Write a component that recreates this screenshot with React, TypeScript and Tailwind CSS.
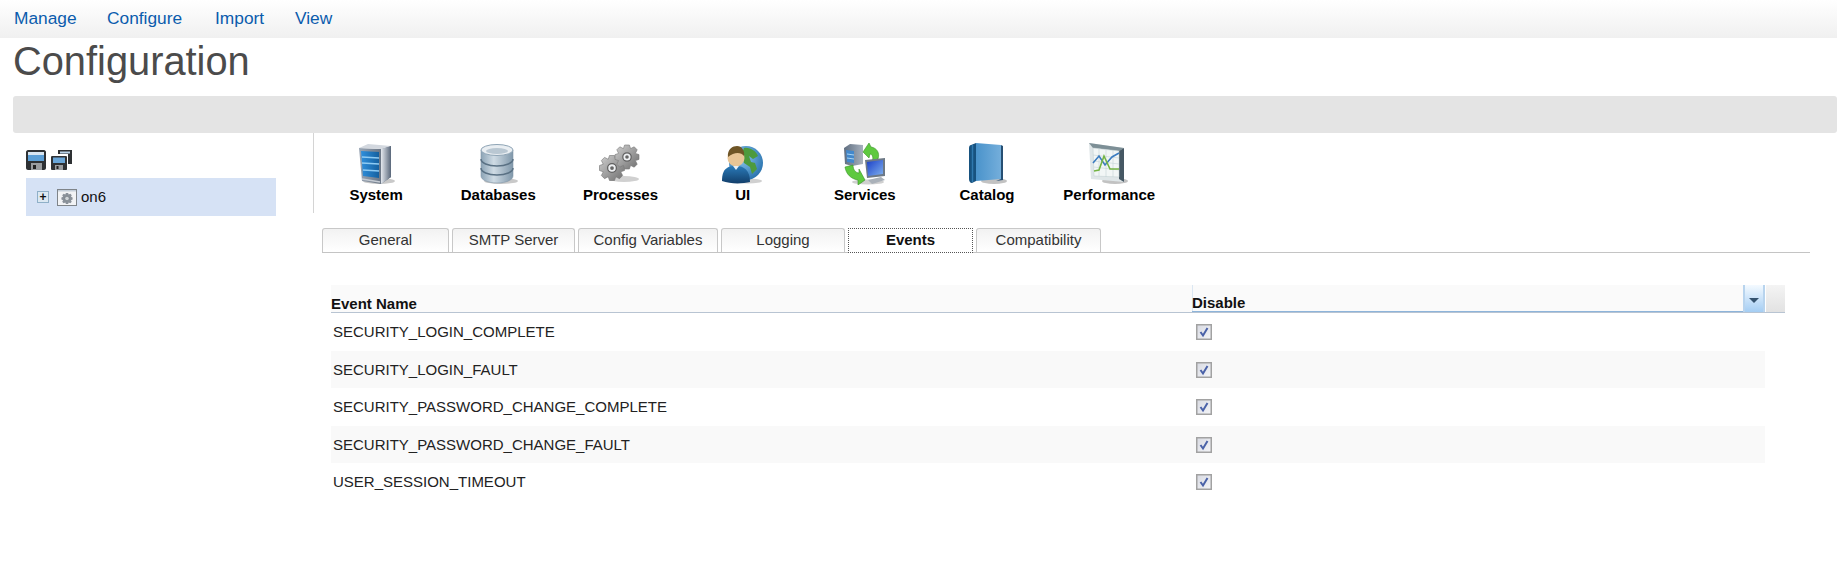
import type { ReactNode } from 'react'

const SystemIcon = () => (
  <svg width="42" height="42" viewBox="0 0 42 42">
    <defs>
      <linearGradient id="sysSide" x1="0" x2="1" y1="0" y2="0">
        <stop offset="0" stopColor="#e4e8ee" />
        <stop offset="1" stopColor="#59677a" />
      </linearGradient>
      <linearGradient id="sysFrame" x1="0" x2="1" y1="0" y2="0">
        <stop offset="0" stopColor="#9aa6b5" />
        <stop offset="1" stopColor="#55606f" />
      </linearGradient>
      <linearGradient id="sysFront" x1="0" x2="1" y1="0" y2="0">
        <stop offset="0" stopColor="#2f8fdc" />
        <stop offset="1" stopColor="#15609f" />
      </linearGradient>
    </defs>
    <ellipse cx="24" cy="38" rx="16" ry="3" fill="#777" opacity="0.4" />
    <path d="M4 5 26 6 36 3 36 34 26 41 7 38Z" fill="url(#sysFrame)" />
    <path d="M4 5 13 1 36 3 26 6Z" fill="#d3d8df" />
    <path d="M26 6 36 3 36 34 26 41Z" fill="url(#sysSide)" />
    <path d="M6 8 24 9 24 35 8 33Z" fill="url(#sysFront)" />
    <path d="M7 14 24 15M7 20 24 21M8 27 24 28" stroke="#8fcbf3" strokeWidth="1.300" />
    <path d="M7 36 25 39" stroke="#c6ccd4" strokeWidth="1.500" />
  </svg>
)

const DatabaseIcon = () => (
  <svg width="42" height="42" viewBox="0 0 42 42">
    <defs>
      <linearGradient id="dbBody" x1="0" x2="1" y1="0" y2="0">
        <stop offset="0" stopColor="#8ca4b6" />
        <stop offset="0.4" stopColor="#cfdbe4" />
        <stop offset="1" stopColor="#7f97aa" />
      </linearGradient>
    </defs>
    <ellipse cx="24" cy="38" rx="17" ry="3" fill="#777" opacity="0.4" />
    <path d="M4 7V33C4 37 11 40 20 40S36 37 36 33V7Z" fill="url(#dbBody)" stroke="#8397a8" strokeWidth="0.6" />
    <ellipse cx="20" cy="7" rx="16" ry="5.500" fill="#e9eef2" stroke="#8ea4b5" />
    <ellipse cx="20" cy="8" rx="11" ry="3" fill="#b9c7d2" />
    <path d="M4 16C4 20 11 23 20 23S36 20 36 16M4 25C4 29 11 32 20 32S36 29 36 25" fill="none" stroke="#5a7184" strokeWidth="1.500" />
  </svg>
)

const gearPath =
  'M-2-10H2L3-7 6-8.500 8.500-6 7-3 10-2V2L7 3 8.500 6 6 8.500 3 7 2 10H-2L-3 7-6 8.500-8.500 6-7 3-10 2V-2L-7-3-8.500-6-6-8.500-3-7Z'

const GearsIcon = () => (
  <svg width="42" height="42" viewBox="0 0 42 42">
    <defs>
      <linearGradient id="gear" x1="0" x2="1" y1="0" y2="1">
        <stop offset="0" stopColor="#cfcfcf" />
        <stop offset="1" stopColor="#6e6e6e" />
      </linearGradient>
    </defs>
    <ellipse cx="25" cy="36" rx="15" ry="3" fill="#777" opacity="0.35" />
    <g transform="translate(13 25) scale(1.250)">
      <path d={gearPath} fill="url(#gear)" stroke="#777" strokeWidth="0.5" />
      <circle r="3.500" fill="#eef0f2" stroke="#5f5f5f" />
      <circle r="1.500" fill="#666" />
    </g>
    <g transform="translate(28 14) scale(1.200)">
      <path d={gearPath} fill="url(#gear)" stroke="#777" strokeWidth="0.5" />
      <circle r="3.500" fill="#eef0f2" stroke="#5f5f5f" />
      <circle r="1.500" fill="#666" />
    </g>
  </svg>
)

const UiIcon = () => (
  <svg width="42" height="42" viewBox="0 0 42 42">
    <defs>
      <radialGradient id="globe" cx="0.4" cy="0.35" r="0.75">
        <stop offset="0" stopColor="#8cc7ef" />
        <stop offset="1" stopColor="#1f6aa8" />
      </radialGradient>
      <linearGradient id="uiShirt" x1="0" x2="0" y1="0" y2="1">
        <stop offset="0" stopColor="#2a7ab8" />
        <stop offset="1" stopColor="#123f6b" />
      </linearGradient>
    </defs>
    <ellipse cx="26" cy="38" rx="14" ry="2.500" fill="#777" opacity="0.35" />
    <circle cx="24" cy="20" r="17" fill="url(#globe)" />
    <path d="M22 5C28 4 34 8 36 13L31 16 27 13 29 19 33 20 35 26 30 31 28 24 22 20 19 12Z" fill="#4d9a3c" />
    <circle cx="14" cy="15" r="8.500" fill="#e8c596" />
    <path d="M6 14C5 6 11 3 15 3 20 3 23 8 22 13 19 9 12 9 6 14Z" fill="#6f5526" />
    <path d="M0 38C0 25 6 23 14 23S28 27 28 39C20 41 8 41 0 38Z" fill="url(#uiShirt)" />
    <path d="M11 23 14 27 17 23Z" fill="#e8eef4" />
  </svg>
)

const ServicesIcon = () => (
  <svg width="42" height="42" viewBox="0 0 42 42">
    <defs>
      <linearGradient id="screen" x1="0" x2="1" y1="0" y2="1">
        <stop offset="0" stopColor="#1a3fc8" />
        <stop offset="1" stopColor="#7fb0ee" />
      </linearGradient>
      <linearGradient id="srv" x1="0" x2="1" y1="0" y2="0">
        <stop offset="0" stopColor="#5f6e80" />
        <stop offset="1" stopColor="#a7b1be" />
      </linearGradient>
    </defs>
    <ellipse cx="24" cy="39" rx="16" ry="2.500" fill="#777" opacity="0.35" />
    <path d="M0 5 6 1 19 2 19 21 8 23 1 21Z" fill="url(#srv)" />
    <path d="M2 7 10 8 10 20 3 19Z" fill="#4288cc" />
    <path d="M3 11 10 12M3 15 10 16" stroke="#a8d4f2" />
    <path d="M19 9 25 0 27 4C33 5 36 10 34 16L28 19C30 14 28 11 26 11L25 15Z" fill="#5ec93f" stroke="#379126" strokeWidth="0.6" />
    <path d="M21 37 14 42 14 37C7 36 2 31 1 24L9 22C9 27 12 30 15 30L15 26Z" fill="#5ec93f" stroke="#379126" strokeWidth="0.6" />
    <path d="M21 17 41 15 41 33 23 35Z" fill="#6d7986" />
    <path d="M23 19 39 17 39 31 24 33Z" fill="url(#screen)" />
    <path d="M24 37 37 34 41 37 28 41Z" fill="#aab1b9" />
  </svg>
)

const CatalogIcon = () => (
  <svg width="42" height="42" viewBox="0 0 42 42">
    <defs>
      <linearGradient id="book" x1="0" x2="1" y1="0" y2="0">
        <stop offset="0" stopColor="#4a93cb" />
        <stop offset="1" stopColor="#74aedb" />
      </linearGradient>
    </defs>
    <ellipse cx="28" cy="38" rx="13" ry="3" fill="#777" opacity="0.45" />
    <path d="M5 2 10 0 10 38 6 40C4 40 3 38 3 36V5C3 3 4 2 5 2Z" fill="#17527f" />
    <path d="M10 0 35 2 35 36 10 38Z" fill="url(#book)" />
    <path d="M35 2 37 3 37 37 30 38 35 36Z" fill="#264f73" />
    <path d="M6.500 2V39" stroke="#2f78ae" strokeWidth="1.500" />
  </svg>
)

const PerformanceIcon = () => (
  <svg width="42" height="42" viewBox="0 0 42 42">
    <ellipse cx="27" cy="38" rx="13" ry="3" fill="#777" opacity="0.45" />
    <path d="M1 0 36 5 36 39 3 36Z" fill="#dfe6e8" />
    <path d="M1 0 36 5 31 8 5 5Z" fill="#7d8f96" />
    <path d="M31 8 36 5 36 39 31 36Z" fill="#465864" />
    <path d="M5 5 31 8 31 34 6 33Z" fill="#f2f6f6" stroke="#bfcccf" strokeWidth="0.5" />
    <path d="M5 12 31 15M5 18 31 21M6 24 31 27M11 6V33M18 7V34M25 7V34" stroke="#c4d4d6" strokeWidth="0.6" />
    <path d="M5 20 11 13 17 22 24 14 31 10" fill="none" stroke="#3b7cc0" strokeWidth="1.600" />
    <path d="M6 28 11 27 16 13 22 26 31 26" fill="none" stroke="#74b444" strokeWidth="1.600" />
  </svg>
)

const SaveIcon = () => (
  <svg width="20" height="20" viewBox="0 0 20 20">
    <path d="M2 0H18C19 0 20 1 20 2V18C20 19 19 20 18 20H2C1 20 0 19 0 18V2C0 1 1 0 2 0Z" fill="#2e3134" />
    <rect x="2" y="2" width="16" height="9" fill="#d8e6f2" />
    <rect x="2" y="5" width="16" height="6" fill="#5c9fd6" />
    <rect x="5" y="13" width="11" height="7" fill="#9a9da0" />
    <rect x="7" y="15" width="3" height="4" fill="#222" />
  </svg>
)

const SaveAllIcon = () => (
  <svg width="21" height="20" viewBox="0 0 21 20">
    <path d="M7 0H21V14H17V4H7Z" fill="#2e3134" />
    <rect x="9" y="1.500" width="10" height="2" fill="#b8d2e8" />
    <path d="M1 6H15C16 6 16 7 16 7V19C16 20 15 20 15 20H1C0 20 0 19 0 19V7C0 6 1 6 1 6Z" fill="#2e3134" />
    <rect x="2" y="7.500" width="12" height="5.500" fill="#6aa6d8" />
    <rect x="4" y="15" width="8" height="5" fill="#9a9da0" />
    <rect x="5.500" y="16" width="2" height="3" fill="#222" />
  </svg>
)

const NodeIcon = () => (
  <svg width="20" height="17" viewBox="0 0 20 17">
    <rect x="0.500" y="0.500" width="19" height="16" fill="#f2f3f5" stroke="#7f8489" />
    <rect x="1" y="1" width="18" height="1.500" fill="#c5cfda" />
    <g transform="translate(10 9.500) scale(0.560)">
      <path d={gearPath} fill="#8a9199" />
      <circle r="4" fill="#cfd4d8" stroke="#6a7178" />
    </g>
  </svg>
)

const tools: { label: string; icon: ReactNode }[] = [
  { label: 'System', icon: <SystemIcon /> },
  { label: 'Databases', icon: <DatabaseIcon /> },
  { label: 'Processes', icon: <GearsIcon /> },
  { label: 'UI', icon: <UiIcon /> },
  { label: 'Services', icon: <ServicesIcon /> },
  { label: 'Catalog', icon: <CatalogIcon /> },
  { label: 'Performance', icon: <PerformanceIcon /> },
]

const tabs = [
  { label: 'General', width: 'w-[127px]' },
  { label: 'SMTP Server', width: 'w-[123px]' },
  { label: 'Config Variables', width: 'w-[140px]' },
  { label: 'Logging', width: 'w-[124px]' },
  { label: 'Events', width: 'w-[125px]', active: true },
  { label: 'Compatibility', width: 'w-[125px]' },
]

const events = [
  'SECURITY_LOGIN_COMPLETE',
  'SECURITY_LOGIN_FAULT',
  'SECURITY_PASSWORD_CHANGE_COMPLETE',
  'SECURITY_PASSWORD_CHANGE_FAULT',
  'USER_SESSION_TIMEOUT',
]

const Checkbox = () => (
  <svg width="16" height="16" viewBox="0 0 16 16" className="block">
    <defs>
      <linearGradient id="checkFill" x1="0" x2="1" y1="0" y2="1">
        <stop offset="0" stopColor="#d8dae2" />
        <stop offset="1" stopColor="#f4f5f8" />
      </linearGradient>
    </defs>
    <rect x="0.750" y="0.750" width="14.500" height="14.500" fill="url(#checkFill)" stroke="#a2a2a2" strokeWidth="1.500" />
    <path d="M4.500 8 7 11.500 11.500 4" fill="none" stroke="#4a62a8" strokeWidth="2" />
  </svg>
)

export default function App() {
  return (
    <div className="h-[579px] overflow-hidden bg-white font-['Liberation_Sans',Arial,sans-serif]">
      <nav className="flex h-[38px] items-center bg-gradient-to-b from-white to-[#f0f0f0] pb-[1px] pl-[14px] text-[17.33px] text-[#0b5cad]">
        <a className="w-[93px]">Manage</a>
        <a className="w-[108px]">Configure</a>
        <a className="w-[80px]">Import</a>
        <a>View</a>
      </nav>

      <h1 className="ml-[13px] h-[58px] text-[39.8px] leading-[46px] text-[#4b4b4b]">Configuration</h1>

      <div className="ml-[13px] h-[37px] rounded-[3px] bg-[#e4e4e4]" />

      <div className="flex">
        <aside className="w-[313px] shrink-0 pl-[26px] pt-[17px]">
          <div className="flex h-[28px] gap-[5px]">
            <SaveIcon />
            <SaveAllIcon />
          </div>
          <div className="flex h-[38px] w-[250px] items-center bg-[#d6e2f5] pl-[11px] text-[15px] text-[#111]">
            <span className="flex size-[12px] items-center justify-center border border-[#8fb0c8] bg-[#dce8f2] text-[12px] font-bold leading-none">
              +
            </span>
            <span className="ml-[8px]">
              <NodeIcon />
            </span>
            <span className="ml-[4px]">on6</span>
          </div>
        </aside>

        <main className="min-w-0 flex-1">
          <div className="flex h-[80px] border-l border-[#d4d4d4] pl-[1px]">
            {tools.map((tool) => (
              <div key={tool.label} className="flex w-[122.200px] flex-col items-center pt-[10px] text-[15px] font-bold text-black">
                {tool.icon}
                <span className="mt-[2px] leading-[16px]">{tool.label}</span>
              </div>
            ))}
          </div>

          <div className="ml-[9px] mr-[27px] mt-[15px] flex h-[25px] gap-[3px] border-b border-[#c4c4c4]">
            {tabs.map((tab) =>
              tab.active ? (
                <div
                  key={tab.label}
                  className={`${tab.width} flex h-[25px] items-center justify-center border border-dotted border-[#555] bg-white text-[15px] font-bold text-[#111]`}
                >
                  {tab.label}
                </div>
              ) : (
                <div
                  key={tab.label}
                  className={`${tab.width} flex h-[24px] items-center justify-center rounded-t-[3px] border border-b-0 border-[#c8c8c8] bg-gradient-to-b from-[#f2f2f2] to-white text-[15px] text-[#333]`}
                >
                  {tab.label}
                </div>
              ),
            )}
          </div>

          <div className="ml-[18px] mr-[52px] mt-[32px] text-[15px] text-[#222]">
            <div className="flex h-[28px] items-end border-b border-[#b8c4d2] font-bold text-[#111]">
              <div className="flex h-full w-[861px] items-end bg-[#fafafa] leading-[16px]">Event Name</div>
              <div className="flex h-full w-[551px] items-end border-b border-[#8db4da] bg-[#fafafa] leading-[16px] [box-shadow:inset_1px_0_0_#dbe7f2]">
                Disable
              </div>
              <div className="relative flex h-full w-[22px] items-center justify-center border-x-2 border-[#b8d4ee] bg-gradient-to-b from-[#f4faff] to-[#a4cdf3]">
                <span className="mt-[3px] h-0 w-0 border-x-[5px] border-t-[5px] border-x-transparent border-t-[#35536f]" />
              </div>
              <div className="ml-[1px] h-full w-[19px] bg-gradient-to-b from-[#f4f4f4] to-[#e2e2e2]" />
            </div>

            <div className="w-[1434px]">
              {events.map((name, i) => (
                <div key={name} className={`flex h-[37.500px] items-center ${i % 2 === 1 ? 'bg-[#f9f9f9]' : 'bg-white'}`}>
                  <div className="w-[861px] pl-[2px] pt-[1px]">{name}</div>
                  <div className="pl-[4px] pt-[1px]">
                    <Checkbox />
                  </div>
                </div>
              ))}
            </div>
          </div>
        </main>
      </div>
    </div>
  )
}
